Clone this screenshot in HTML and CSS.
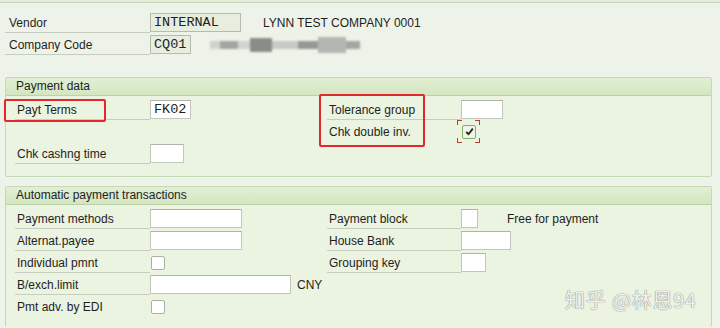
FILE: index.html
```html
<!DOCTYPE html>
<html lang="en">
<head>
  <meta charset="UTF-8" />
  <title>Vendor Payment Data</title>
  <link rel="stylesheet" href="styles.css">
</head>
<body>
  <div class="topbar"></div>

  <div class="head">
    <div class="head-row">
      <div class="lbl">Vendor</div>
      <div class="fld"><span class="out w91">INTERNAL</span></div>
      <div class="desc">LYNN TEST COMPANY 0001</div>
    </div>
    <div class="head-row">
      <div class="lbl">Company Code</div>
      <div class="fld short"><span class="out w41">CQ01</span></div>
      <div class="mosaic">
        <i class="m1"></i><i class="m2"></i><i class="m3"></i><i class="m4"></i><i class="m5"></i><i class="m6"></i><i class="m7"></i><i class="m8"></i>
      </div>
    </div>
  </div>

  <div class="box box-pay">
    <div class="box-title">Payment data</div>
    <div class="grid">
      <div class="lbl">Payt Terms</div>
      <div class="fld"><span class="inp w41 val">FK02</span></div>
      <div class="lbl">Tolerance group</div>
      <div class="fld"><span class="inp w42"></span></div>

      <div class="empty"></div>
      <div class="empty"></div>
      <div class="lbl nl">Chk double inv.</div>
      <div class="fld">
        <span class="focus">
          <span class="chk on">
            <svg width="9" height="9" viewBox="0 0 9 9"><path d="M1.2 4.8 L3.5 7.2 L7.8 1.6" fill="none" stroke="#222" stroke-width="1.8"/></svg>
          </span>
        </span>
      </div>

      <div class="lbl">Chk cashng time</div>
      <div class="fld"><span class="inp w34"></span></div>
      <div class="empty"></div>
      <div class="empty"></div>
    </div>
    <div class="mark mark-terms"></div>
    <div class="mark mark-tol"></div>
  </div>

  <div class="box box-auto">
    <div class="box-title">Automatic payment transactions</div>
    <div class="grid">
      <div class="lbl">Payment methods</div>
      <div class="fld"><span class="inp w92"></span></div>
      <div class="lbl">Payment block</div>
      <div class="fld"><span class="inp w17"></span><span class="note">Free for payment</span></div>

      <div class="lbl">Alternat.payee</div>
      <div class="fld"><span class="inp w92"></span></div>
      <div class="lbl">House Bank</div>
      <div class="fld"><span class="inp w50"></span></div>

      <div class="lbl">Individual pmnt</div>
      <div class="fld"><span class="chk"></span></div>
      <div class="lbl">Grouping key</div>
      <div class="fld"><span class="inp w25"></span></div>

      <div class="lbl">B/exch.limit</div>
      <div class="fld"><span class="inp w141"></span><span class="unit">CNY</span></div>
      <div class="empty"></div>
      <div class="empty"></div>

      <div class="lbl nl">Pmt adv. by EDI</div>
      <div class="fld"><span class="chk"></span></div>
      <div class="empty"></div>
      <div class="empty"></div>
    </div>
  </div>

  <div class="watermark">知乎 @林恩94</div>
</body>
</html>
```

FILE: styles.css
```css
body {
  margin: 0;
  width: 720px;
  height: 328px;
  overflow: hidden;
  position: relative;
  background: #eef3e9;
  font-family: 'Liberation Sans', Arial, sans-serif;
  font-size: 12px;
  color: #1e1e1e;
}
.topbar {
  height: 2px;
  background: #e3ecdb;
  border-bottom: 1px solid #c9d6bd;
}

/* header fields */
.head {
  margin-top: 8px;
  padding-left: 5px;
}
.head-row {
  display: flex;
  align-items: center;
  height: 22px;
}
.head-row .lbl {
  width: 141px;
  padding-left: 4px;
}
.head-row .fld {
  width: 113px;
}
.head-row .fld.short {
  width: 60px;
}
.desc {
  padding-top: 1px;
}

.lbl {
  height: 18px;
  padding-top: 3px;
  line-height: 18px;
  border-bottom: 1px solid #c6ccbf;
  white-space: nowrap;
}
.lbl.nl {
  border-bottom-color: transparent;
}
.fld {
  display: flex;
  align-items: center;
  height: 22px;
}

.out, .inp {
  display: inline-block;
  box-sizing: border-box;
  height: 19px;
  line-height: 18px;
  border: 1px solid #b8c0b2;
  font-family: 'Liberation Mono', 'Courier New', monospace;
  font-size: 13.5px;
  padding-left: 3px;
  color: #222;
}
.out {
  background: #e7eedf;
  border-color: #b4bcab;
}
.inp {
  background: #fff;
  border-color: #c1c7bc;
  border-top-color: #aeb4aa;
}
.w17 { width: 17px; }
.w25 { width: 25px; }
.w34 { width: 34px; }
.w41 { width: 41px; }
.w42 { width: 42px; }
.w50 { width: 50px; }
.w91 { width: 91px; }
.w92 { width: 92px; }
.w141 { width: 141px; }

.mosaic {
  display: flex;
  align-items: center;
  height: 20px;
  margin-top: 2px;
  filter: blur(1px);
}
.mosaic i {
  display: block;
  height: 8px;
  background: #8c8c8c;
}
.m1 { width: 10px; background: #d0d2cd !important; }
.m2 { width: 18px; background: #a3a5a1 !important; }
.m3 { width: 12px; background: #d2d4cf !important; }
.m4 { width: 22px; background: #8a8c88 !important; height: 14px !important; }
.m5 { width: 26px; background: #c8cac5 !important; }
.m6 { width: 20px; background: #969894 !important; }
.m7 { width: 28px; background: #b4b6b1 !important; height: 16px !important; }
.m8 { width: 14px; background: #a4a6a2 !important; }

/* group boxes */
.box {
  position: relative;
  margin: 0 8px 0 5px;
  border: 1px solid #c7d8b6;
  border-radius: 2px;
  background: #ebf3e1;
}
.box-pay {
  margin-top: 22px;
  padding-bottom: 12px;
}
.box-auto {
  margin-top: 9px;
  padding-bottom: 10px;
  border-bottom: none;
}
.box-title {
  height: 17px;
  line-height: 17px;
  padding-left: 10px;
  background: linear-gradient(#e1efd4, #d3e6c1);
  border-bottom: 1px solid #bcd2a8;
}
.grid {
  display: grid;
  grid-template-columns: 135px 177px 134px auto;
  grid-auto-rows: 22px;
  padding: 2px 0 0 9px;
}
.grid .lbl {
  padding-left: 2px;
}

.chk {
  display: inline-flex;
  align-items: center;
  justify-content: center;
  box-sizing: border-box;
  width: 14px;
  height: 14px;
  margin-left: 1px;
  margin-top: 1px;
  background: #fff;
  border: 1px solid #a9b1a4;
  border-radius: 2px;
}
.chk.on {
  background: #eef5e6;
  border-color: #86ad69;
}
.focus {
  position: relative;
  display: inline-flex;
  padding: 4px 4px;
  margin-left: -4px;
  background:
    linear-gradient(#c0392b, #c0392b) left top / 5px 1px no-repeat,
    linear-gradient(#c0392b, #c0392b) left top / 1px 5px no-repeat,
    linear-gradient(#c0392b, #c0392b) right top / 5px 1px no-repeat,
    linear-gradient(#c0392b, #c0392b) right top / 1px 5px no-repeat,
    linear-gradient(#c0392b, #c0392b) left bottom / 5px 1px no-repeat,
    linear-gradient(#c0392b, #c0392b) left bottom / 1px 5px no-repeat,
    linear-gradient(#c0392b, #c0392b) right bottom / 5px 1px no-repeat,
    linear-gradient(#c0392b, #c0392b) right bottom / 1px 5px no-repeat;
}
.note {
  margin-left: 29px;
  padding-top: 1px;
}
.unit {
  margin-left: 6px;
  padding-top: 1px;
}

/* red annotation frames */
.mark {
  position: absolute;
  border: 2px solid #e2272d;
  border-radius: 2px;
}
.mark-terms {
  left: -2px;
  top: 21px;
  width: 98px;
  height: 19px;
}
.mark-tol {
  left: 313px;
  top: 16px;
  width: 102px;
  height: 49px;
}

.watermark {
  position: absolute;
  left: 565px;
  top: 285px;
  font-family: 'Noto Sans CJK SC', 'Noto Sans', sans-serif;
  font-size: 20px;
  color: rgba(255, 255, 255, 0.9);
  text-shadow: 0 0 1px #8a8a8a, 0 0 1px #8a8a8a;
  letter-spacing: 0.8px;
}
```
